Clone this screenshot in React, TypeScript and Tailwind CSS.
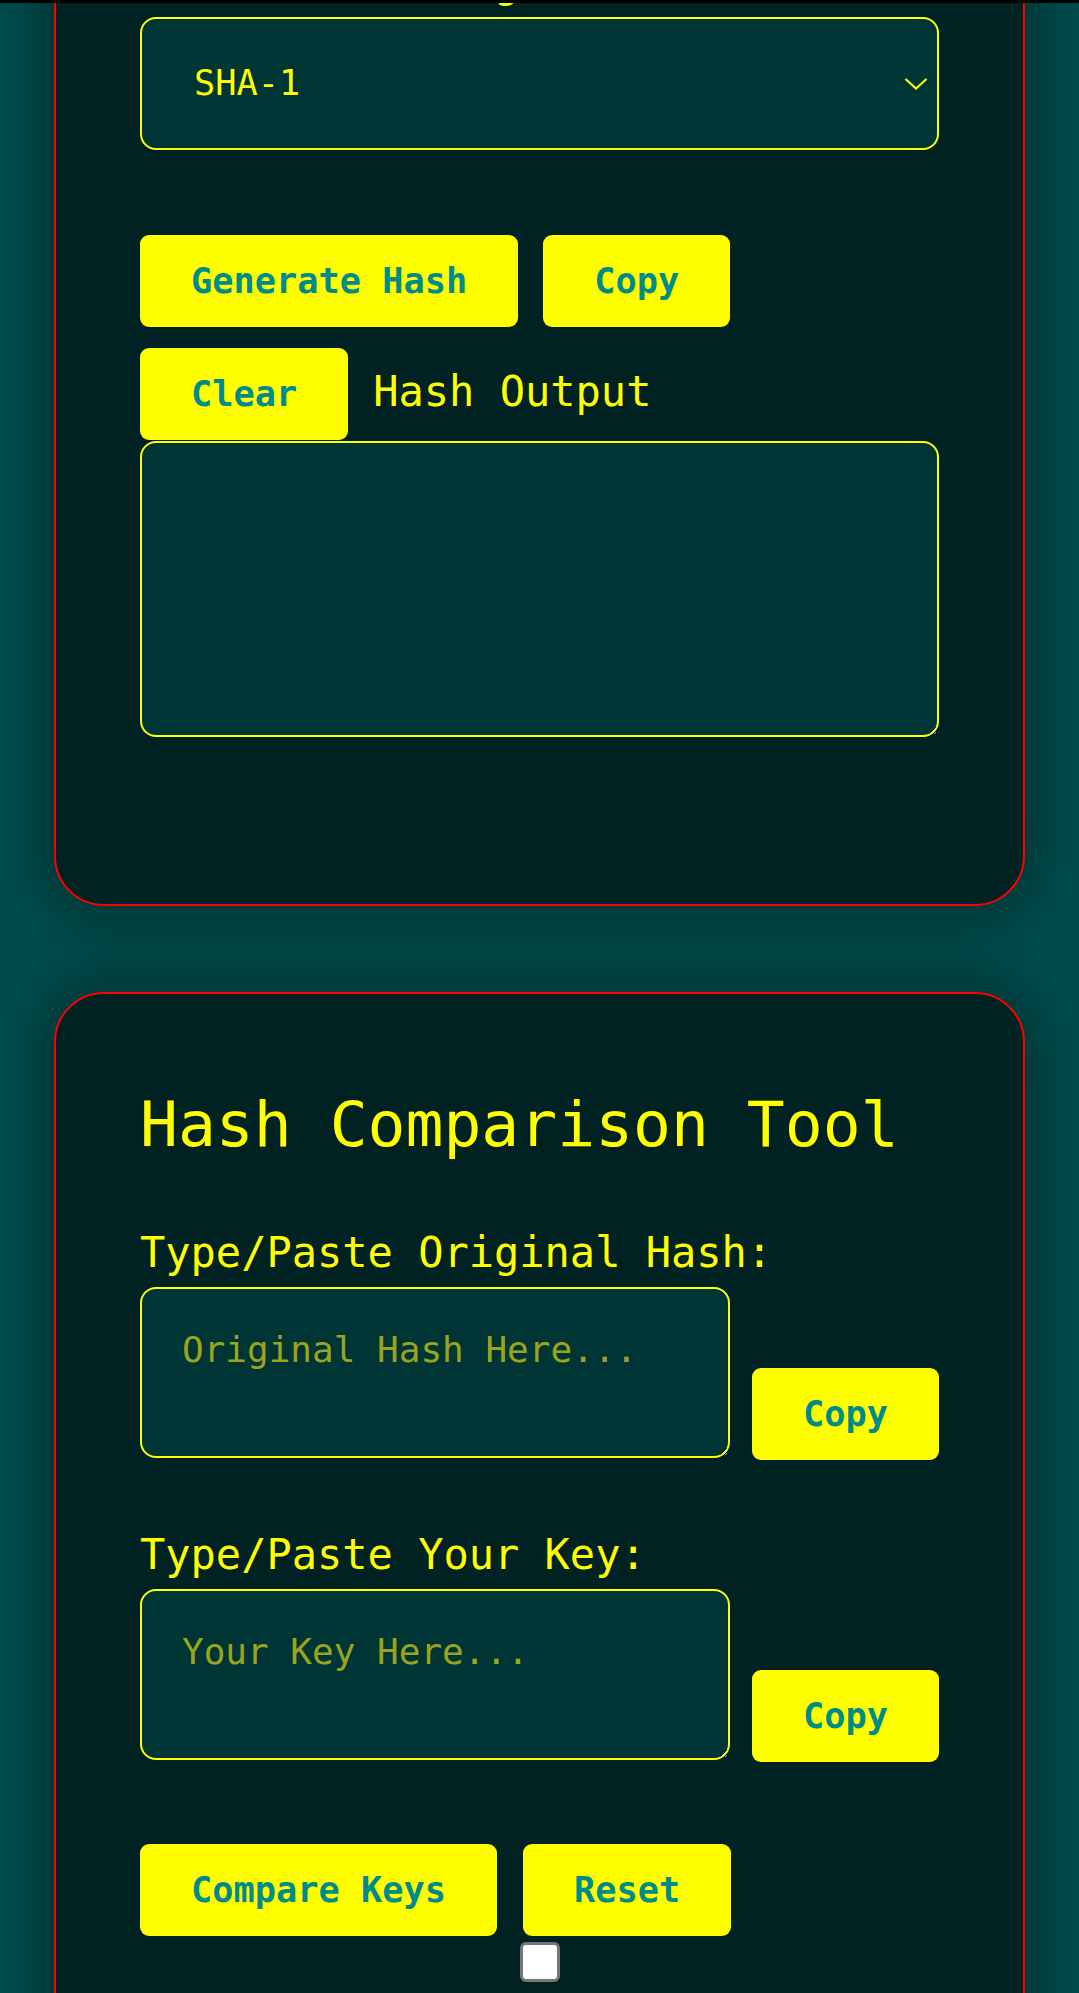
import React from 'react';

const mono = "font-['DejaVu_Sans_Mono','Liberation_Mono',monospace]";

const btn =
  'h-[92px] shrink-0 rounded-[9px] bg-[#ffff00] px-[51px] text-[35.3px] font-bold leading-[92px] text-[#008b8b]';

const area =
  'block w-full rounded-[16px] border-2 border-[#ffff00] bg-[#003535] p-[40px] text-[36px] leading-[42px] text-[#ffff00] placeholder:text-[#9ca41d] outline-none';

const label = 'block text-[42px] leading-[49px] text-[#ffff00]';

const card =
  'rounded-[50px] border-2 border-[#ff0000] bg-[#002222] px-[84px] pt-[94px] shadow-[0_0_60px_12px_rgba(0,0,0,0.35)]';

export default function App() {
  return (
    <div className={`h-[1993px] overflow-hidden bg-[#004c4c] ${mono}`}>
      <div className="relative z-10 h-[3px] bg-black" />

      <div className="mt-[-581px] px-[54px]">
        {/* Generator card */}
        <section className={`${card} pb-[167px]`}>
          <h2 className="text-[63px] leading-[73px] text-[#ffff00]">Hash Generator</h2>
          <label className={`${label} mt-[67px] mb-[10px]`}>Type/Paste Your Text:</label>
          <textarea className={`${area} h-[171px]`} placeholder="Your Text Here..." />

          <label className={`${label} mt-[70px] mb-[10px]`}>Select Hash Algorithm:</label>
          <div className="relative">
            <select
              defaultValue="SHA-1"
              className="block h-[133px] w-full appearance-none rounded-[16px] border-2 border-[#ffff00] bg-[#003535] pl-[52px] text-[35.3px] text-[#ffff00] outline-none"
            >
              <option>MD5</option>
              <option>SHA-1</option>
              <option>SHA-256</option>
              <option>SHA-512</option>
            </select>
            <svg
              className="pointer-events-none absolute right-[11px] top-1/2 -translate-y-1/2"
              width="24"
              height="13"
              viewBox="0 0 24 13"
              fill="none"
            >
              <path d="M1.5 1.5 L12 11 L22.5 1.5" stroke="#ffff00" strokeWidth="2.2" />
            </svg>
          </div>

          <div className="mt-[85px] flex flex-wrap items-baseline gap-x-[25px] gap-y-[21px]">
            <button className={btn}>Generate Hash</button>
            <button className={btn}>Copy</button>
            <button className={btn}>Clear</button>
            <span className="text-[42px] leading-[49px] text-[#ffff00]">Hash Output</span>
          </div>
          <textarea className={`${area} mt-[1px] h-[296px]`} readOnly />
        </section>

        {/* Comparison card */}
        <section className={`${card} mt-[86px] pb-[120px]`}>
          <h2 className="text-[63px] leading-[73px] text-[#ffff00]">Hash Comparison Tool</h2>

          <label className={`${label} mt-[67px] mb-[10px]`}>Type/Paste Original Hash:</label>
          <div className="flex items-end gap-[22px]">
            <textarea className={`${area} mb-[2px] h-[171px] flex-1`} placeholder="Original Hash Here..." />
            <button className={btn}>Copy</button>
          </div>

          <label className={`${label} mt-[70px] mb-[10px]`}>Type/Paste Your Key:</label>
          <div className="flex items-end gap-[22px]">
            <textarea className={`${area} mb-[2px] h-[171px] flex-1`} placeholder="Your Key Here..." />
            <button className={btn}>Copy</button>
          </div>

          <div className="mt-[82px] flex gap-[26px]">
            <button className={btn}>Compare Keys</button>
            <button className={btn}>Reset</button>
          </div>
          <div className="mt-[6px] flex justify-center">
            <input
              type="checkbox"
              className="h-[40px] w-[40px] appearance-none rounded-[6px] border-[3px] border-[#767676] bg-white"
            />
          </div>
        </section>
      </div>
    </div>
  );
}
